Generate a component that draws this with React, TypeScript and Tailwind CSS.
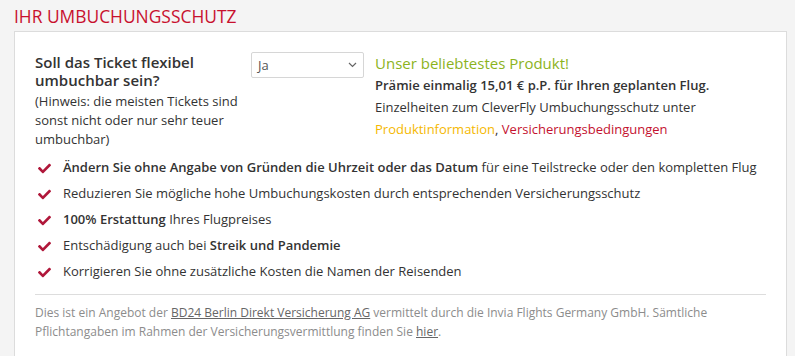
import { FaCheck } from "react-icons/fa";

const features = [
  <>
    <b className="font-semibold">Ändern Sie ohne Angabe von Gründen die Uhrzeit oder das Datum</b> für eine Teilstrecke oder den kompletten Flug
  </>,
  <>Reduzieren Sie mögliche hohe Umbuchungskosten durch entsprechenden Versicherungsschutz</>,
  <>
    <b className="font-semibold">100% Erstattung</b> Ihres Flugpreises
  </>,
  <>
    Entschädigung auch bei <b className="font-semibold">Streik und Pandemie</b>
  </>,
  <>Korrigieren Sie ohne zusätzliche Kosten die Namen der Reisenden</>,
];

export default function App() {
  return (
    <div className="min-h-[356px] bg-[#f4f4f4] pl-[14px] pr-[8px] font-['Open_Sans',sans-serif] text-[#333]">
      <h2 className="pt-[1px] text-[17.4px] leading-[30px] text-[#c8102e]">IHR UMBUCHUNGSSCHUTZ</h2>

      <div className="h-[330px] border border-[#dcdcdc] bg-white pl-[20px] pr-[20px] pt-[20px]">
        <div className="flex">
          <div className="w-[216px]">
            <div className="mt-[1px] text-[15px] font-semibold leading-[18px] text-[#333]">
              Soll das Ticket flexibel umbuchbar sein?
            </div>
            <p className="mt-[3px] text-[13px] leading-[19px]">
              (Hinweis: die meisten Tickets sind sonst nicht oder nur sehr teuer umbuchbar)
            </p>
          </div>

          <div className="relative h-[26px] w-[113px] rounded-[2px] border border-[#d6d6d6] bg-white">
            <span className="absolute left-[6px] top-[3px] text-[13px] text-[#555]">Ja</span>
            <svg className="absolute right-[6px] top-[9px]" width="9" height="6" viewBox="0 0 9 6">
              <path d="M1 1l3.5 3.5L8 1" fill="none" stroke="#666" strokeWidth="1.2" />
            </svg>
          </div>

          <div className="ml-[11px] mt-[1px]">
            <div className="text-[15px] leading-[20px] text-[#8cb31d]">Unser beliebtestes Produkt!</div>
            <div className="mt-[1px] text-[13px] font-semibold leading-[22px]">
              Prämie einmalig 15,01 € p.P. für Ihren geplanten Flug.
            </div>
            <div className="text-[13px] leading-[22px]">Einzelheiten zum CleverFly Umbuchungsschutz unter</div>
            <div className="text-[13px] leading-[22px]">
              <span className="text-[#f5b800]">Produktinformation</span>,{" "}
              <span className="text-[#c41230]">Versicherungsbedingungen</span>
            </div>
          </div>
        </div>

        <ul className="mt-[6px] flex flex-col">
          {features.map((f, i) => (
            <li key={i} className="flex h-[26px] items-center text-[13px]">
              <FaCheck className="ml-[3px] mr-[12px] text-[13px] text-[#b0173a]" />
              <span>{f}</span>
            </li>
          ))}
        </ul>

        <div className="mt-[9px] border-t border-[#dddddd]" />
        <p className="mt-[8px] text-[12px] leading-[19px] text-[#8c8c8c]">
          Dies ist ein Angebot der <span className="text-[#666] underline">BD24 Berlin Direkt Versicherung AG</span> vermittelt durch die Invia Flights Germany GmbH. Sämtliche Pflichtangaben im Rahmen der Versicherungsvermittlung finden Sie{" "}
          <span className="text-[#666] underline">hier</span>.
        </p>
      </div>
    </div>
  );
}
